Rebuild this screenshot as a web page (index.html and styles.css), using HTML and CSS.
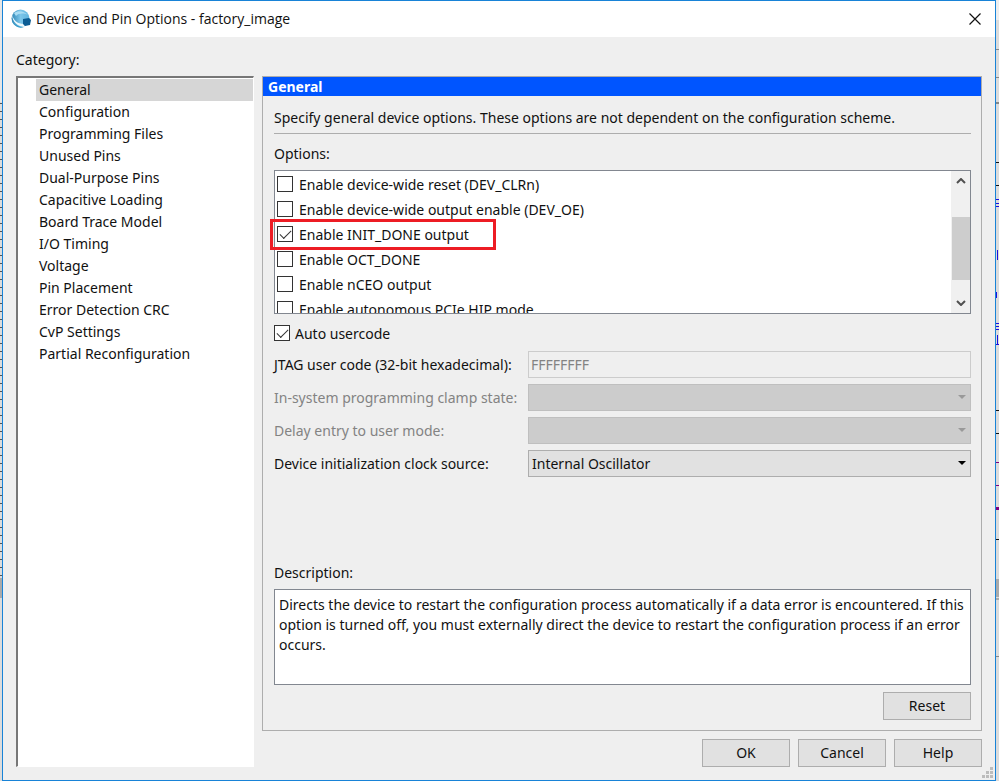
FILE: index.html
```
<!DOCTYPE html>
<html lang="en">
<head>
    <meta charset="UTF-8">
    <meta name="viewport" content="width=device-width, initial-scale=1.0">
    <title>Device and Pin Options - factory_image</title>
    <link rel="stylesheet" href="styles.css">
</head>
<body>
    <div class="edge-left"></div>

    <main class="dialog">
        <header class="titlebar">
            <svg class="app-icon" viewBox="0 0 20 20" width="20" height="20">
                <defs>
                    <linearGradient id="globe" x1="0" y1="0" x2="1" y2="0">
                        <stop offset="0" stop-color="#2f86b5"/>
                        <stop offset="0.5" stop-color="#7cc6ea"/>
                        <stop offset="1" stop-color="#5fb4de"/>
                    </linearGradient>
                </defs>
                <circle cx="9.5" cy="9.5" r="9" fill="url(#globe)"/>
                <path d="M3 4C7 1 13 2 17 6C13 4 8 4 5 7Z" fill="#a9dcf3"/>
                <path d="M1 5C2 11 6 15 13 15L14 18C7 18 1 13 1 5Z" fill="#eef9fd"/>
                <path d="M1 12C4 16 8 18 13 18C8 20 3 17 1 12Z" fill="#3a9cca"/>
                <path d="M12 10L18 9L20 11L19 16L14 17L12 15Z" fill="#0b5c94"/>
            </svg>
            <h1>Device and Pin Options - factory_image</h1>
            <button class="close" type="button" aria-label="Close">
                <svg viewBox="0 0 12 12" width="12" height="12"><path d="M0.5 0.5L11.5 11.5M11.5 0.5L0.5 11.5" stroke="#111" stroke-width="1.2"/></svg>
            </button>
        </header>

        <div class="content">
            <div class="category-label" id="categoryLabel">Category:</div>
            <div class="columns">
                <nav class="categories" aria-labelledby="categoryLabel">
                    <a class="selected" href="#general">General</a>
                    <a href="#configuration">Configuration</a>
                    <a href="#programming">Programming Files</a>
                    <a href="#unused">Unused Pins</a>
                    <a href="#dual">Dual-Purpose Pins</a>
                    <a href="#capacitive">Capacitive Loading</a>
                    <a href="#board">Board Trace Model</a>
                    <a href="#io">I/O Timing</a>
                    <a href="#voltage">Voltage</a>
                    <a href="#placement">Pin Placement</a>
                    <a href="#crc">Error Detection CRC</a>
                    <a href="#cvp">CvP Settings</a>
                    <a href="#partial">Partial Reconfiguration</a>
                </nav>

                <div class="right">
                    <section class="panel" id="general">
                        <h2>General</h2>
                        <div class="panel-body">
                            <p class="intro">Specify general device options. These options are not dependent on the configuration scheme.</p>
                            <div class="section-label">Options:</div>

                            <div class="options">
                                <div class="option-list">
                                    <label><input type="checkbox"> Enable device-wide reset (DEV_CLRn)</label>
                                    <label><input type="checkbox"> Enable device-wide output enable (DEV_OE)</label>
                                    <label class="marked"><input type="checkbox" checked> Enable INIT_DONE output</label>
                                    <label><input type="checkbox"> Enable OCT_DONE</label>
                                    <label><input type="checkbox"> Enable nCEO output</label>
                                    <label><input type="checkbox"> Enable autonomous PCIe HIP mode</label>
                                </div>
                                <div class="scrollbar">
                                    <svg viewBox="0 0 10 6" width="10" height="6"><path d="M1 5L5 1L9 5" fill="none" stroke="#505050" stroke-width="2"/></svg>
                                    <div class="thumb"></div>
                                    <svg viewBox="0 0 10 6" width="10" height="6"><path d="M1 1L5 5L9 1" fill="none" stroke="#505050" stroke-width="2"/></svg>
                                </div>
                            </div>

                            <label class="usercode"><input type="checkbox" checked> Auto usercode</label>

                            <div class="fields">
                                <label for="jtag">JTAG user code (32-bit hexadecimal):</label>
                                <input type="text" id="jtag" value="FFFFFFFF" disabled>

                                <label class="off" for="clamp">In-system programming clamp state:</label>
                                <div class="select off"><select id="clamp" disabled><option></option></select></div>

                                <label class="off" for="delay">Delay entry to user mode:</label>
                                <div class="select off"><select id="delay" disabled><option></option></select></div>

                                <label for="clock">Device initialization clock source:</label>
                                <div class="select"><select id="clock"><option>Internal Oscillator</option></select></div>
                            </div>

                            <label class="section-label description-label" for="description">Description:</label>
                            <textarea id="description" readonly>Directs the device to restart the configuration process automatically if a data error is encountered. If this option is turned off, you must externally direct the device to restart the configuration process if an error occurs.</textarea>
                            <button class="btn reset" type="button">Reset</button>
                        </div>
                    </section>

                    <div class="buttons">
                        <button class="btn" type="button">OK</button>
                        <button class="btn" type="button">Cancel</button>
                        <button class="btn" type="button">Help</button>
                    </div>
                </div>
            </div>
        </div>

        <svg class="grip" viewBox="0 0 11 11" width="11" height="11">
            <path d="M8 0h3v3h-3zM4 4h3v3h-3zM8 4h3v3h-3zM0 8h3v3h-3zM4 8h3v3h-3zM8 8h3v3h-3z" fill="#bcbcbc"/>
        </svg>
    </main>

    <!-- sliver of the window behind the dialog -->
    <div class="edge-right">
        <svg width="3" height="781" viewBox="0 0 3 781">
            <path d="M0 0h3v20h-3z" fill="#eee"/>
            <path d="M0 49h3v1h-3zM0 77h3v1h-3zM0 102h3v2h-3zM0 656h3v1h-3z" fill="#888"/>
            <path d="M0 162h3v1h-3zM0 185h3v1h-3zM0 410h3v1h-3zM0 433h3v1h-3zM0 539h3v1h-3z" fill="#111"/>
            <path d="M0 199h3v1h-3zM0 203h3v1h-3zM0 206h3v1h-3zM1 250h1v10h-1zM0 292h1v6h-1zM0 323h3v1h-3zM0 326h3v1h-3zM0 329h3v1h-3zM1 335h1v10h-1zM0 344h3v1h-3z" fill="#1a10e0"/>
            <path d="M0 462h3v1h-3zM0 485h3v1h-3zM0 507h3v3h-3z" fill="#800080"/>
            <path d="M0 579h3v18h-3zM0 598h3v2h-3z" fill="#aaa"/>
        </svg>
    </div>
</body>
</html>
```

FILE: styles.css
```
:root {
    --dialog-bg: #efefef;
    --accent: #1883d7;
    --line: #adadad;
    --box-line: #828790;
    --disabled: #838383;
}

*, *::after {
    box-sizing: border-box;
}

body {
    margin: 0;
    min-height: 100vh;
    display: flex;
    background: #dcdcdc;
    color: #111;
    font-family: "Noto Sans", sans-serif;
    font-size: 14px;
    line-height: 20px;
}

button, input, select, textarea {
    font: inherit;
    color: inherit;
}

/* what shows of the window behind */
.edge-left {
    width: 2px;
    background:
        linear-gradient(#e6e6e6 0 102px, transparent 102px 578px, #aaa 578px 598px, #dcdcdc 598px),
        repeating-linear-gradient(#dcdcdc 0 7px, #555 7px 8px);
}

.edge-right {
    width: 3px;
    height: 100vh;
    overflow: hidden;
}

.edge-right svg {
    display: block;
}

.dialog {
    position: relative;
    flex: 1;
    display: flex;
    flex-direction: column;
    border: 1px solid var(--accent);
    background: var(--dialog-bg);
}

/* title bar */
.titlebar {
    display: flex;
    align-items: center;
    height: 36px;
    padding: 0 14px 0 8px;
    background: #fff;
}

.titlebar h1 {
    flex: 1;
    margin: 0 0 0 5px;
    font-family: "Open Sans", sans-serif;
    font-size: 14px;
    font-weight: 400;
}

.close {
    display: flex;
    padding: 0;
    border: none;
    background: none;
}

.content {
    flex: 1;
    display: flex;
    flex-direction: column;
    padding: 13px;
}

.category-label {
    margin-bottom: 6px;
}

.columns {
    flex: 1;
    display: flex;
    gap: 8px;
}

/* category list */
.categories {
    width: 238px;
    padding: 1px 0 0 18px;
    background: #fff;
    border: 1px solid #fff;
    border-top: 2px solid #777;
    border-left: 2px solid #777;
}

.categories a {
    display: block;
    height: 22px;
    padding-left: 3px;
    line-height: 22px;
    color: inherit;
    text-decoration: none;
}

.categories .selected {
    background: #d6d6d6;
}

.right {
    flex: 1;
    display: flex;
    flex-direction: column;
}

.panel {
    flex: 1;
    display: flex;
    flex-direction: column;
    border: 1px solid var(--line);
}

.panel h2 {
    margin: 0;
    padding-left: 5px;
    background: #0055ff;
    color: #fff;
    font-size: 14px;
    font-weight: 700;
    line-height: 19px;
}

.panel-body {
    flex: 1;
    display: flex;
    flex-direction: column;
    padding: 10px 10px 10px 11px;
}

.intro {
    margin: 0 0 10px;
    padding: 2px 0 5px;
    border-bottom: 1px solid var(--line);
}

.section-label {
    margin-bottom: 6px;
}

/* options box */
.options {
    display: flex;
    height: 144px;
    border: 1px solid var(--box-line);
    background: #fff;
}

/* reaches out to the left so the marker is not clipped */
.option-list {
    flex: 1;
    height: 142px;
    overflow: hidden;
    margin-left: -8px;
    padding: 1px 0 0 10px;
}

.option-list label, .usercode {
    display: flex;
    align-items: center;
    gap: 6px;
    height: 25px;
}

.marked {
    position: relative;
}

.marked::after {
    content: "";
    position: absolute;
    left: -7px;
    top: -3px;
    width: 226px;
    height: 31px;
    border: 3px solid #ed1c24;
}

input[type="checkbox"] {
    appearance: none;
    width: 16px;
    height: 16px;
    margin: 0 0 2px;
    border: 1px solid #333;
    background: #fff;
}

input[type="checkbox"]:checked::after {
    content: "";
    display: block;
    width: 11px;
    height: 6px;
    margin: 3px 0 0 2px;
    border: solid #333;
    border-width: 0 0 1px 1px;
    transform: rotate(-45deg);
}

.scrollbar {
    width: 19px;
    display: flex;
    flex-direction: column;
    align-items: center;
    justify-content: space-between;
    padding: 7px 0;
    background: #f0f0f0;
}

.thumb {
    width: 18px;
    height: 63px;
    margin-top: 12px;
    background: #cdcdcd;
}

.usercode {
    margin: 7px 0 5px;
    gap: 5px;
}

/* form rows */
.fields {
    display: grid;
    grid-template-columns: 248px 1fr;
    gap: 6px;
    align-items: center;
}

.fields .off {
    color: var(--disabled);
}

.fields input {
    height: 27px;
    padding: 0 2px;
    border: 1px solid #ccc;
    background: var(--dialog-bg);
    color: var(--disabled);
}

.select {
    position: relative;
}

.select::after {
    content: "";
    position: absolute;
    right: 5px;
    top: 11px;
    border: 4px solid transparent;
    border-top-color: #000;
    border-bottom: none;
}

.select.off::after {
    border-top-color: #999;
}

select {
    appearance: none;
    display: block;
    width: 100%;
    height: 27px;
    padding: 0 3px;
    border: 1px solid var(--line);
    border-radius: 0;
    background: #e1e1e1;
}

select:disabled {
    border-color: #bfbfbf;
    background: #ccc;
    opacity: 1;
}

.description-label {
    margin-top: auto;
}

textarea {
    display: block;
    height: 96px;
    padding: 5px 4px;
    border: 1px solid var(--box-line);
    background: #fff;
    resize: none;
}

/* buttons */
.btn {
    width: 88px;
    height: 28px;
    padding: 0;
    border: 1px solid var(--line);
    background: #e1e1e1;
}

.reset {
    align-self: flex-end;
    margin-top: 7px;
}

.buttons {
    display: flex;
    justify-content: flex-end;
    gap: 8px;
    margin-top: 8px;
}

.grip {
    position: absolute;
    right: 2px;
    bottom: 2px;
}
```
